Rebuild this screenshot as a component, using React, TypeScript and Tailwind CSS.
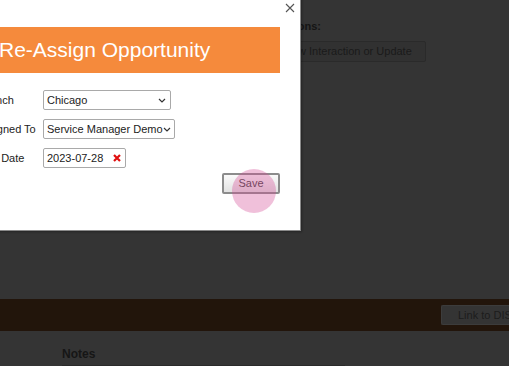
import React from 'react';

const font = { fontFamily: '"Liberation Sans", Arial, sans-serif' };

function Chevron() {
  return (
    <svg width="8" height="5" viewBox="0 0 8 5" className="shrink-0">
      <path d="M1 1 L4 4 L7 1" fill="none" stroke="#333" strokeWidth="1.2" />
    </svg>
  );
}

function Select({ value, width }: { value: string; width: string }) {
  return (
    <div className={`${width} h-[20px] border border-[#a9a9a9] rounded-[2px] bg-white flex items-center justify-between pl-[3px] pr-[4px] text-[11px] text-[#222]`}>
      <span className="whitespace-nowrap">{value}</span>
      <Chevron />
    </div>
  );
}

function Row({ label, shift, children }: { label: string; shift: string; children: React.ReactNode }) {
  return (
    <div className="flex items-center h-[20px]">
      <div className="w-[67px] shrink-0 text-[11px] text-[#222] whitespace-nowrap">
        <span className={`inline-block ${shift}`}>{label}</span>
      </div>
      {children}
    </div>
  );
}

export default function App() {
  return (
    <div style={font} className="relative w-[509px] h-[366px] overflow-hidden bg-[#343434]">
      {/* dimmed page behind the dialog */}
      <div className="flex flex-col h-full">
        <div className="h-[302px] pl-[277px] pt-[20px] flex flex-col">
          <div className="text-[11px] font-bold text-[#151515] leading-[13px]">Actions:</div>
          <div className="mt-[8px] w-[149px] h-[21px] border border-[#2a2a2a] bg-[#313131] rounded-[2px] flex items-center px-[6px] text-[11px] text-[#1a1a1a] whitespace-nowrap">
            New Interaction or Update
          </div>
        </div>
        <div className="h-[32px] bg-[#22150b] flex items-center pl-[441px]">
          <div className="w-[68px] h-[20px] bg-[#343434] border border-[#3c3c3c] border-r-0 rounded-l-[2px] flex items-center pl-[16px] text-[11px] text-[#1c1c1c] whitespace-nowrap overflow-hidden">
            Link to DIS
          </div>
        </div>
        <div className="pl-[62px] pt-[14px]">
          <div className="w-[283px] text-[12px] font-bold text-[#161616] border-b border-[#2a2a2a] pb-[2px]">Notes</div>
        </div>
      </div>

      {/* dialog */}
      <div className="absolute left-[-40px] top-[-20px] w-[341px] h-[251px] bg-white border-r border-b border-[#8a8a8a] shadow-[1px_1px_2px_rgba(0,0,0,0.3)]">
        <div className="absolute left-[325px] top-[23px]">
          <svg width="10" height="10" viewBox="0 0 10 10">
            <path d="M1 1 L9 9 M9 1 L1 9" stroke="#555" strokeWidth="1.1" />
          </svg>
        </div>
        <div className="mt-[47px] ml-[20px] w-[300px] h-[46px] bg-[#f58a3c] flex items-center pl-[19px]">
          <span className="text-[21px] text-white whitespace-nowrap">Re-Assign Opportunity</span>
        </div>
        <div className="pl-[16px] pr-[20px] pt-[17px] flex flex-col gap-[9px]">
          <Row label="Branch" shift="ml-[3px]">
            <Select value="Chicago" width="w-[128px]" />
          </Row>
          <Row label="Assigned To" shift="ml-0">
            <Select value="Service Manager Demo" width="w-[132px]" />
          </Row>
          <Row label="Close Date" shift="ml-[-6px]">
            <div className="w-[83px] h-[20px] border border-[#a9a9a9] rounded-[2px] bg-white flex items-center justify-between pl-[3px] pr-[4px] text-[11px] text-[#222]">
              <span>2023-07-28</span>
              <svg width="8" height="8" viewBox="0 0 8 8">
                <path d="M1 1 L7 7 M7 1 L1 7" stroke="#e01010" strokeWidth="2.2" />
              </svg>
            </div>
          </Row>
          <div className="flex justify-end mt-[-4px]">
            <div className="relative mt-[-3px]">
              <button className="w-[58px] h-[21px] border-2 border-[#8c8c8c] rounded-[2px] bg-gradient-to-b from-[#fafafa] to-[#e2e2e2] text-[11px] text-[#444]">
                Save
              </button>
              <div className="absolute left-[10px] top-[-1px] w-[44px] h-[44px] rounded-full bg-[rgba(212,75,149,0.35)]" />
            </div>
          </div>
        </div>
      </div>
    </div>
  );
}
